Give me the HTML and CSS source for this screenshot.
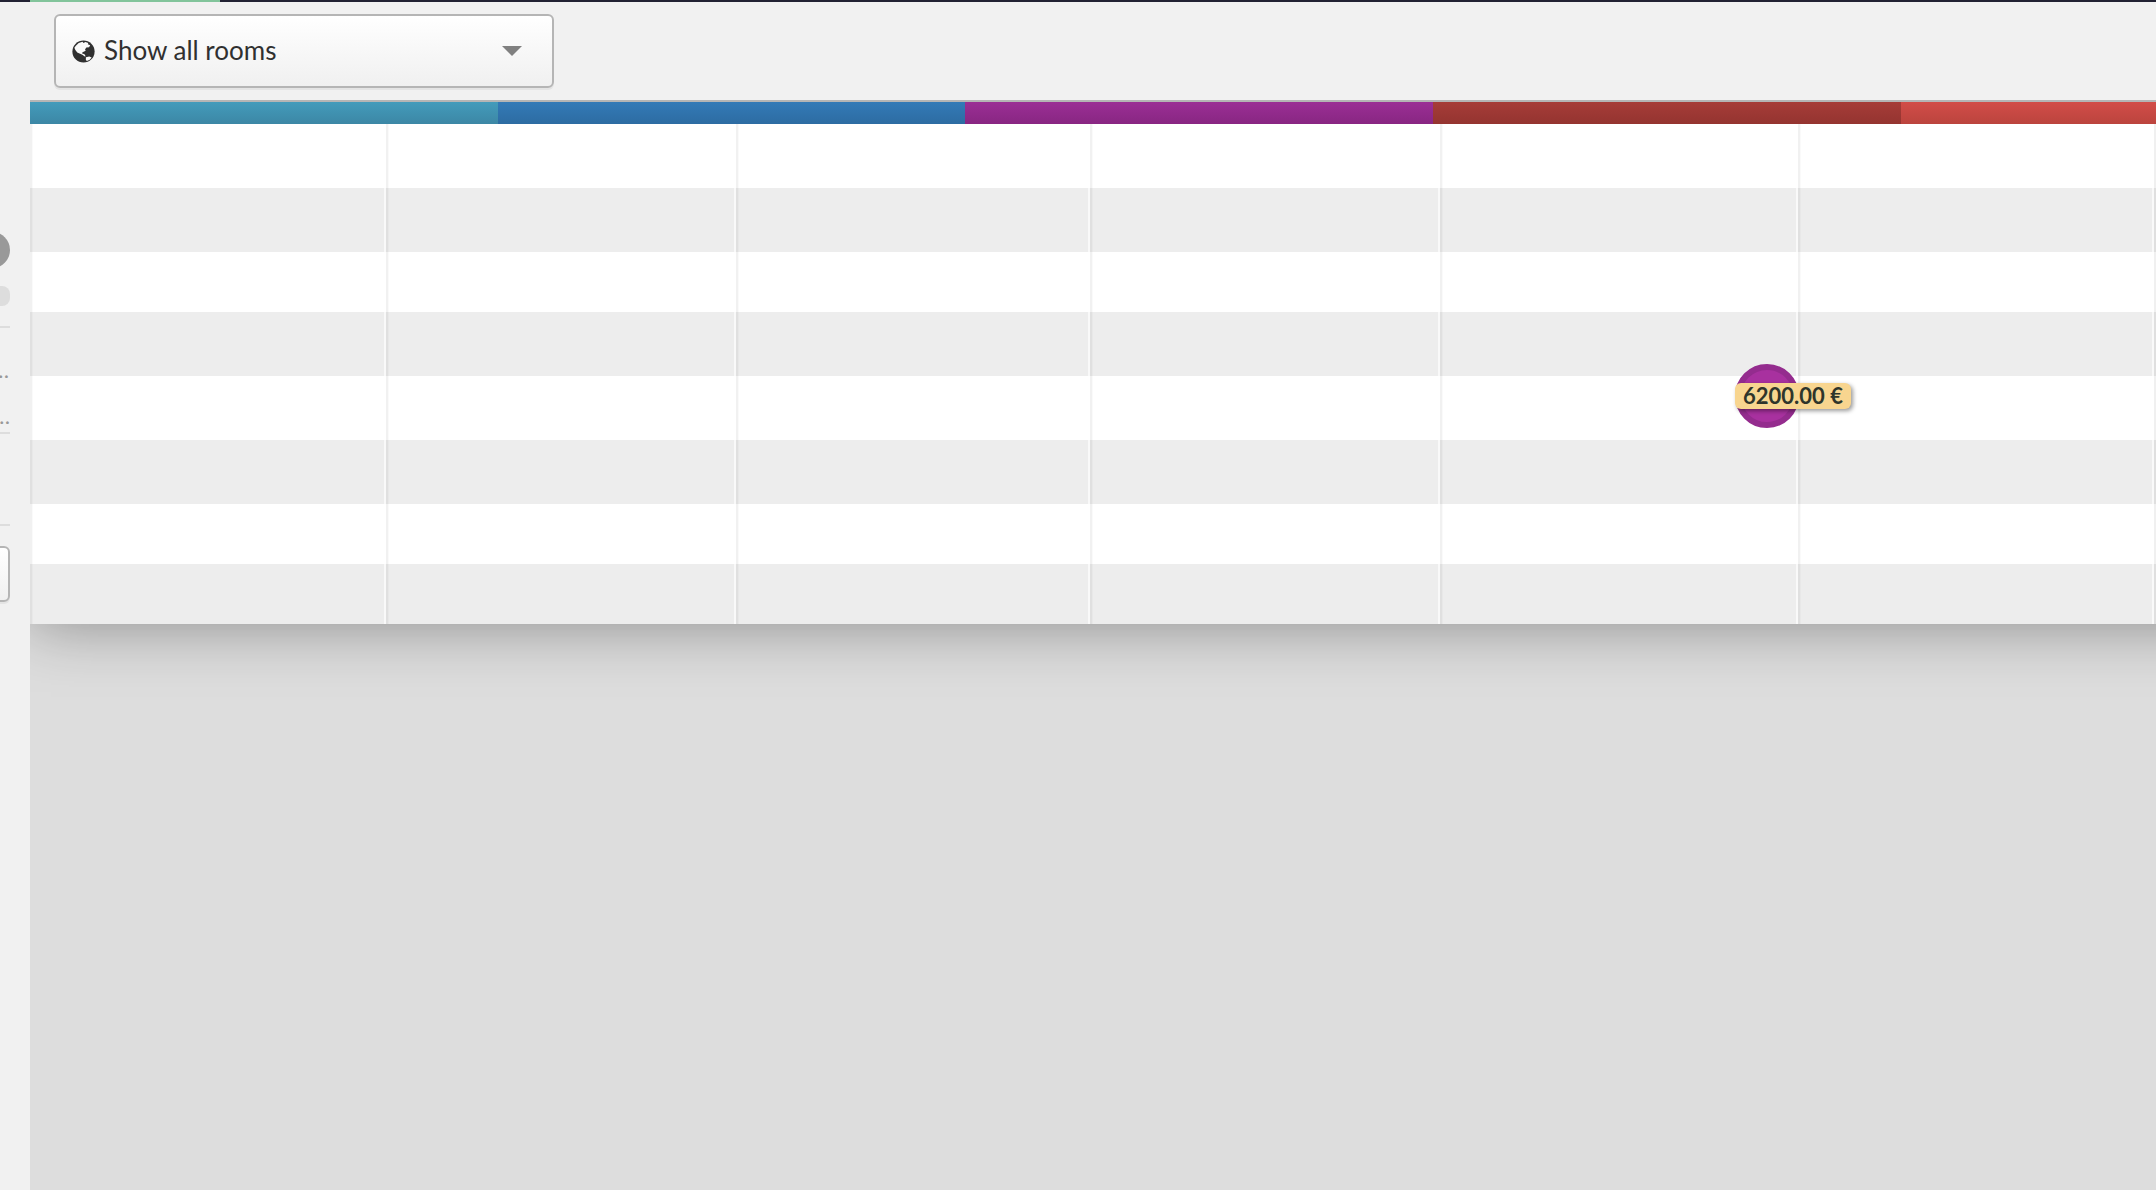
FILE: index.html
```
<!DOCTYPE html>
<html lang="en">
<head>
<meta charset="utf-8">
<title>Rooms</title>
<link rel="stylesheet" href="styles.css">
</head>
<body>
<div class="progress"><div class="progress-value"></div></div>
<div class="app">
  <aside class="sidebar">
    <div class="avatar"></div>
    <div class="pill"></div>
    <div class="entries"><p class="entry">…</p><p class="entry entry-last">…</p></div>
    <div class="section"></div>
    <button class="side-button" type="button" aria-label="Open"></button>
  </aside>
  <main class="main">
    <header class="toolbar">
      <button class="room-select" type="button">
        <svg class="globe" viewBox="0 0 24 24" aria-hidden="true">
          <circle cx="12" cy="12" r="11.6" fill="#303030"/>
          <path fill="#fafafa" d="M4 6 7 3l4-1.200 1 1.200 2-.8 3 .8-.5 1.500 2.500 1-1.200 2-2.800.3-1.500 2 1 1-2 1.500-1.500.2-.2 1.800 2 .4 1.500 2.300-1 .3-2.500-1.800L5.500 13 3.500 10.500 2.500 8Z"/>
          <path fill="#fafafa" d="m14.500 18 3.500-.8 2.500 1-2 2.300-3 1.500-1-1.200Z"/>
        </svg>
        <span class="room-label">Show all rooms</span>
        <svg class="caret" viewBox="0 0 20 10" aria-hidden="true"><path d="M0 0h20L10 10Z" fill="#808080"/></svg>
      </button>
    </header>
    <div class="categories">
      <div class="category teal"></div><div class="category blue"></div><div class="category purple"></div><div class="category brick"></div><div class="category red"></div>
    </div>
    <section class="board">
      <div class="rows">
        <div class="row"></div><div class="row"></div><div class="row short"></div><div class="row"></div><div class="row"></div><div class="row"></div><div class="row short"></div><div class="row short"></div>
      </div>
      <div class="columns">
        <div class="column"></div><div class="column"></div><div class="column"></div><div class="column"></div><div class="column"></div><div class="column"></div><div class="column"></div>
      </div>
      <div class="marker"><span class="price">6200.00 €</span></div>
    </section>
  </main>
</div>
</body>
</html>
```
FILE: styles.css
```
* { box-sizing: border-box; }
body {
  margin: 0;
  min-height: 100vh;
  display: flex;
  flex-direction: column;
  overflow-x: hidden;
  background: #f1f1f1;
  color: #303030;
  font-family: Lato, sans-serif;
}
.progress { height: 2px; padding-left: 30px; background: #222233; }
.progress-value { width: 190px; height: 2px; background: #82c49b; }
.app { flex: 1; display: flex; }
.sidebar { width: 30px; flex: none; padding-top: 230px; overflow: hidden; }
.avatar { width: 36px; height: 36px; margin-left: -26px; border-radius: 50%; background: #999; }
.pill { width: 40px; height: 20px; margin: 18px 0 20px -30px; border-radius: 8px; background: #ddd; }
.entries {
  width: 10px;
  height: 108px;
  padding-top: 19px;
  border-top: 2px solid #ddd;
  border-bottom: 2px solid #ddd;
}
.entry {
  display: flex;
  justify-content: flex-end;
  margin: 0;
  padding-right: 1px;
  font-size: 22px;
  line-height: 46px;
  height: 46px;
  color: #999;
}
.entry-last { padding-right: 0; }
.section { width: 10px; height: 92px; border-bottom: 2px solid #ddd; }
.side-button {
  display: block;
  width: 40px;
  height: 56px;
  margin: 20px 0 0 -30px;
  border: 2px solid #b5b5b5;
  border-radius: 6px;
  background: linear-gradient(#fff, #f0f0f0);
  box-shadow: 0 2px 0 #e4e4e4;
}
.main { flex: 1; min-width: 0; overflow: hidden; background: #ddd; }
.toolbar {
  position: relative;
  z-index: 1;
  height: 100px;
  padding: 12px 24px;
  border-bottom: 2px solid #b5b5b5;
  background: #f1f1f1;
}
.room-select {
  display: flex;
  align-items: center;
  width: 500px;
  height: 74px;
  padding: 0 30px 0 16px;
  border: 2px solid #b5b5b5;
  border-radius: 6px;
  background: linear-gradient(#fff, #f0f0f0);
  box-shadow: 0 2px 0 #e4e4e4;
  color: #303030;
  font: 26px/32px Lato, sans-serif;
}
.globe { width: 23px; height: 23px; margin-right: 9px; }
.room-label { padding-bottom: 2px; }
.caret { width: 20px; height: 10px; margin-left: auto; }
.categories { position: relative; z-index: 1; display: flex; height: 22px; width: 110%; }
.category { flex: 1; }
.teal { background: linear-gradient(#439bbb, #3c87a5); }
.blue { background: linear-gradient(#337ab7, #2d6ca2); }
.purple { background: linear-gradient(#9b2f95, #882682); }
.brick { background: linear-gradient(#a63c38, #943430); }
.red { background: linear-gradient(#d24d48, #bb443e); }
.board { position: relative; z-index: 0; }
.board::before {
  content: "";
  position: absolute;
  z-index: -1;
  inset: 0 -100px 0 0;
  box-shadow: 0 0 60px rgba(0, 0, 0, 0.38);
}
.row { height: 64px; background: #fff; }
.row:nth-child(even) { background: #ededed; }
.short { height: 60px; }
.columns {
  position: absolute;
  inset: 0;
  display: grid;
  grid-template-columns: 356fr 350fr 354fr 350fr 358fr 356fr 2px;
}
.column {
  border-left: 2px solid rgba(0, 0, 0, 0.06);
  border-right: 2px solid rgba(255, 255, 255, 0.7);
  box-shadow: inset 1px 0 0 rgba(0, 0, 0, 0.02);
}
.column:last-child { border-right: 0; }
.marker {
  position: absolute;
  left: 80.2%;
  top: 240px;
  width: 64px;
  height: 64px;
  display: flex;
  align-items: center;
  border: 6px solid #942c8e;
  border-radius: 50%;
  background: #a8319f;
}
.price {
  flex: none;
  margin-left: -6px;
  padding: 0 8px;
  border-radius: 6px;
  background: #f8d58f;
  box-shadow: 2px 2px 4px rgba(0, 0, 0, 0.4);
  color: #2f352b;
  font-weight: 700;
  font-size: 22px;
  line-height: 26px;
  white-space: nowrap;
}
```
